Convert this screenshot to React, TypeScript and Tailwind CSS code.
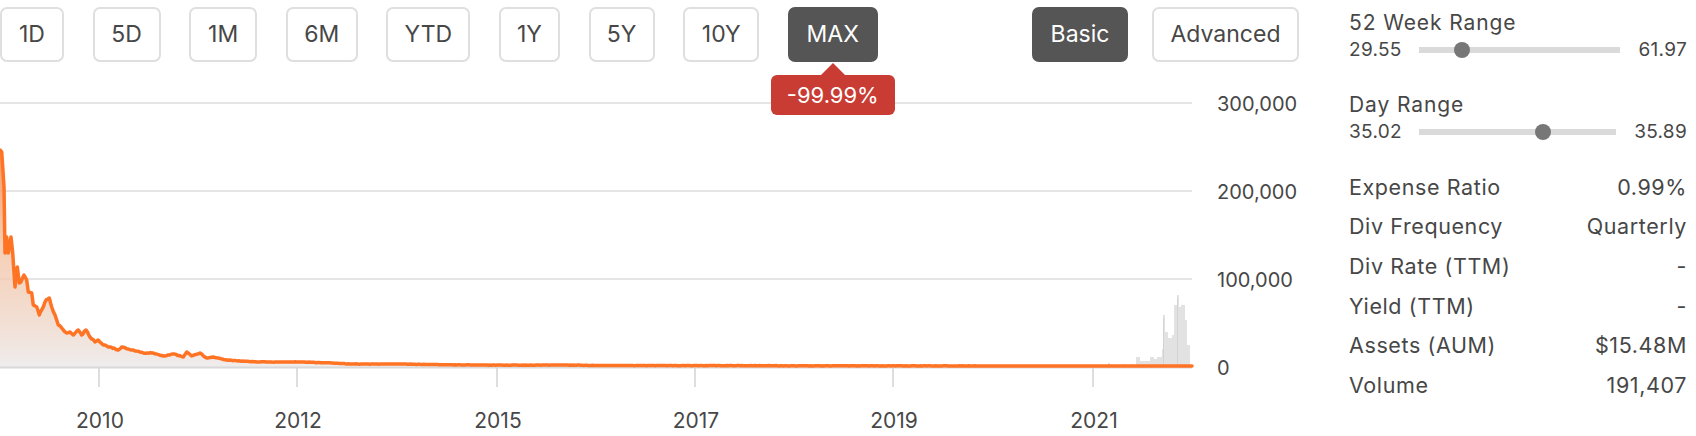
import React from 'react';

const RANGES = [
  { label: '1D', w: 'w-[64px]' },
  { label: '5D', w: 'w-[68px]' },
  { label: '1M', w: 'w-[68px]' },
  { label: '6M', w: 'w-[72px]' },
  { label: 'YTD', w: 'w-[84px]' },
  { label: '1Y', w: 'w-[61px]' },
  { label: '5Y', w: 'w-[66px]' },
  { label: '10Y', w: 'w-[76px]' },
  { label: 'MAX', w: 'w-[90px]' },
];

const STATS = [
  { label: 'Expense Ratio', value: '0.99%' },
  { label: 'Div Frequency', value: 'Quarterly' },
  { label: 'Div Rate (TTM)', value: '-' },
  { label: 'Yield (TTM)', value: '-' },
  { label: 'Assets (AUM)', value: '$15.48M' },
  { label: 'Volume', value: '191,407' },
];

// price curve, page coordinates (baseline = 367)
const KEY: [number, number][] = [
  [0, 150], [1.7, 152], [4, 187], [5, 253], [6.7, 237], [8.3, 253], [11, 237], [12.7, 253],
  [15, 287], [17.3, 267], [19.3, 283], [21.7, 280], [24, 275], [26.7, 280], [28.3, 292],
  [31.7, 293], [33.3, 305], [36.7, 307], [39.3, 315], [41.7, 310], [45, 302], [49.3, 298],
  [51.7, 307], [55, 315], [58.3, 325], [63.3, 330], [66.7, 333], [70, 332], [73.3, 335],
  [78.3, 330], [81.7, 335], [86, 330], [90, 337], [95, 342], [98.3, 340], [103.3, 345],
  [110, 347], [118.3, 350], [121.7, 347], [128.3, 349], [133.3, 350], [143.3, 353],
  [153.3, 353], [163.3, 356], [173.3, 354], [183.3, 357], [186.7, 352], [191.7, 356],
  [200, 353], [206.7, 358], [213.3, 357], [226.7, 360], [240, 361], [260, 362],
  [276.7, 362], [300, 362], [333, 363], [350, 364], [366.7, 364], [400, 364],
  [430, 364.5], [470, 365], [520, 365.2], [560, 365], [600, 365.5], [700, 365.6],
  [800, 365.8], [900, 365.8], [1000, 366], [1100, 366], [1192, 366],
];

function rng(seed: number) {
  let s = seed;
  return () => {
    s = (s * 16807) % 2147483647;
    return (s - 1) / 2147483646;
  };
}

function buildLine() {
  const r = rng(11);
  const pts: [number, number][] = [];
  for (let i = 0; i < KEY.length - 1; i++) {
    const [x0, y0] = KEY[i];
    const [x1, y1] = KEY[i + 1];
    const steps = Math.max(1, Math.round((x1 - x0) / 1.5));
    for (let s = 0; s < steps; s++) {
      const t = s / steps;
      const y = y0 + (y1 - y0) * t;
      const amp = Math.min(2.5, (367 - y) * 0.04) + 0.2;
      pts.push([x0 + (x1 - x0) * t, s === 0 ? y : y + (r() - 0.5) * amp]);
    }
  }
  pts.push(KEY[KEY.length - 1]);
  return pts;
}

const LINE = buildLine();
const LINE_D = LINE.map(([x, y], i) => `${i ? 'L' : 'M'}${x.toFixed(1)} ${y.toFixed(1)}`).join(' ');
const AREA_D = `${LINE_D} L1192 367 L0 367 Z`;

// volume bars: [x, width, top]
const BARS: [number, number, number][] = [
  [972, 3, 365], [985, 4, 365.5], [1000, 3, 365], [1018, 5, 365.5],
  [1108, 2, 363], [1122, 2, 364], [1130, 3, 364], [1136, 4, 357], [1140, 5, 361],
  [1145, 5, 361], [1150, 4, 357], [1154, 3, 359], [1157, 5, 357], [1162, 2, 349],
  [1163, 2, 315], [1165, 3, 332], [1168, 4, 338], [1172, 2, 335], [1174, 3, 305],
  [1177, 2, 295], [1179, 2, 307], [1181, 4, 305], [1185, 2, 320], [1187, 3, 345],
];

const XTICKS = [
  { x: 99, label: '2010' },
  { x: 297, label: '2012' },
  { x: 497, label: '2015' },
  { x: 695, label: '2017' },
  { x: 893, label: '2019' },
  { x: 1093, label: '2021' },
];

const YTICKS = [
  { y: 103, label: '300,000' },
  { y: 191, label: '200,000' },
  { y: 279, label: '100,000' },
  { y: 367, label: '0' },
];

const Chart: React.FC = () => (
  <svg width={1299} height={374} viewBox="0 62 1299 374" className="block overflow-visible">
    <defs>
      <linearGradient id="fill" x1="0" y1="150" x2="0" y2="367" gradientUnits="userSpaceOnUse">
        <stop offset="0%" stopColor="#f6894a" stopOpacity="0.9" />
        <stop offset="45%" stopColor="#f3c0a0" stopOpacity="0.75" />
        <stop offset="100%" stopColor="#efeded" stopOpacity="1" />
      </linearGradient>
    </defs>
    {YTICKS.slice(0, 3).map((t) => (
      <line key={t.y} x1={0} x2={1192} y1={t.y} y2={t.y} stroke="#dcdcdc" strokeWidth={1.6} />
    ))}
    {BARS.map(([x, w, top], i) => (
      <rect key={i} x={x} y={top} width={w} height={367 - top} fill="#e2e2e2" />
    ))}
    <line x1={1163.5} x2={1163.5} y1={318} y2={367} stroke="#cfcfcf" strokeWidth={0.8} />
    <line x1={1177.5} x2={1177.5} y1={298} y2={367} stroke="#cfcfcf" strokeWidth={0.8} />
    <path d={AREA_D} fill="url(#fill)" />
    <line x1={0} x2={1192} y1={367.5} y2={367.5} stroke="#d9d9d9" strokeWidth={2} />
    <path d={LINE_D} fill="none" stroke="#ff7324" strokeWidth={3.5} strokeLinejoin="round" strokeLinecap="round" />
    {XTICKS.map((t) => (
      <g key={t.x}>
        <line x1={t.x} x2={t.x} y1={368} y2={387} stroke="#d6d6d6" strokeWidth={1.6} />
        <text x={t.x + 1} y={428} textAnchor="middle" fontSize={21} fill="#474747">
          {t.label}
        </text>
      </g>
    ))}
    {YTICKS.map((t) => (
      <text key={t.label} x={1217} y={t.y + 8} fontSize={20} fill="#474747">
        {t.label}
      </text>
    ))}
  </svg>
);

interface RangeBarProps {
  low: string;
  high: string;
  track: string;
  knob: string;
}

const RangeBar: React.FC<RangeBarProps> = ({ low, high, track, knob }) => (
  <div className="flex h-[28px] items-center text-[19px] tracking-[0.3px] text-[#474747]">
    <span className="w-[70px]">{low}</span>
    <div className={`relative h-[6px] bg-[#dadada] ${track}`}>
      <div className={`absolute top-[-5px] h-[16px] w-[16px] rounded-full bg-[#777777] ${knob}`} />
    </div>
    <span className="flex-1 text-right">{high}</span>
  </div>
);

const App: React.FC = () => {
  return (
    <div className="flex h-[436px] w-[1696px] overflow-hidden bg-white font-['Inter',sans-serif] text-[#474747]">
      <div className="flex w-[1299px] flex-col">
        <div className="flex pt-[7px]">
          <div className="flex gap-[28.6px]">
            {RANGES.map((r) => {
              const active = r.label === 'MAX';
              return (
                <div key={r.label} className="relative">
                  <button
                    className={`flex h-[55px] items-center justify-center rounded-[7px] border-2 text-[23px] ${r.w} ${
                      active ? 'border-[#555555] bg-[#555555] text-white' : 'border-[#dfdfdf] bg-white text-[#474747]'
                    }`}
                  >
                    {r.label}
                  </button>
                  {active && (
                    <div className="absolute left-[-17px] top-[56px] z-10 flex flex-col items-center">
                      <div className="h-0 w-0 border-x-[12px] border-b-[12px] border-x-transparent border-b-[#c83c33]" />
                      <div className="flex h-[40px] w-[124px] items-center justify-center rounded-[6px] bg-[#c83c33] text-[22px] text-white">
                        -99.99%
                      </div>
                    </div>
                  )}
                </div>
              );
            })}
          </div>
          <div className="ml-auto flex gap-[24px]">
            <button className="flex h-[55px] w-[96px] items-center justify-center rounded-[7px] border-2 border-[#555555] bg-[#555555] text-[23px] text-white">
              Basic
            </button>
            <button className="flex h-[55px] w-[147px] items-center justify-center rounded-[7px] border-2 border-[#dfdfdf] bg-white text-[23px] text-[#474747]">
              Advanced
            </button>
          </div>
        </div>
        <Chart />
      </div>

      <div className="ml-[50px] flex w-[338px] flex-col pt-[10px]">
        <div className="text-[21px] leading-[26px] tracking-[0.9px]">52 Week Range</div>
        <RangeBar low="29.55" high="61.97" track="w-[201px]" knob="left-[35px]" />
        <div className="mt-[28px] text-[21px] leading-[26px] tracking-[0.9px]">Day Range</div>
        <RangeBar low="35.02" high="35.89" track="w-[197px]" knob="left-[116px]" />
        <div className="mt-[21px] flex flex-col">
          {STATS.map((s) => (
            <div key={s.label} className="flex h-[39.7px] items-center justify-between text-[21.5px] tracking-[0.6px]">
              <span>{s.label}</span>
              <span>{s.value}</span>
            </div>
          ))}
        </div>
      </div>
    </div>
  );
};

export default App;
